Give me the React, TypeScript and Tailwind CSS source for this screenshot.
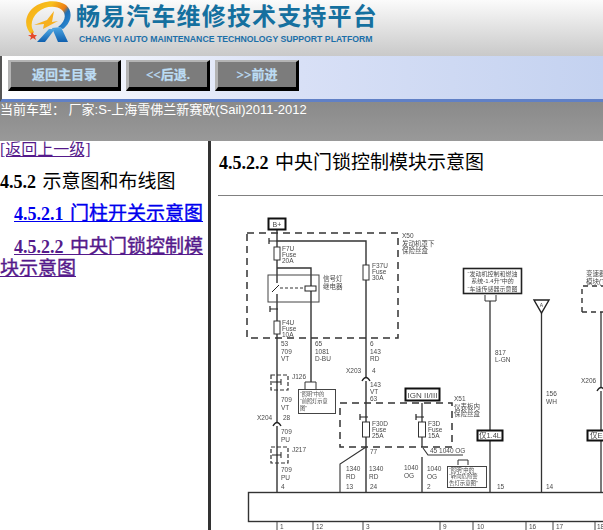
const T = ({ x, y, c, s = 6.5, a }: { x: number; y: number; c: string; s?: number; a?: "middle" }) => (
  <text x={x} y={y} fontSize={s} fill="#4a4a4a" textAnchor={a} fontFamily="'Liberation Sans','Noto Sans CJK SC',sans-serif">{c}</text>
);

function Fuse({ x, y, h = 13, w = 6 }: { x: number; y: number; h?: number; w?: number }) {
  return <rect x={x - w / 2} y={y} width={w} height={h} fill="#fff" stroke="#333" strokeWidth="1" />;
}

function Tick({ x, y }: { x: number; y: number }) {
  return <path d={`M${x - 6} ${y}H${x + 2}M${x - 6} ${y - 3}V${y + 3}`} fill="none" stroke="#222" strokeWidth="1.2" />;
}

function Arc({ x, y }: { x: number; y: number }) {
  return <path d={`M${x - 4} ${y + 2}Q${x} ${y - 5} ${x + 4} ${y + 2}`} fill="#fff" stroke="#222" strokeWidth="1.4" />;
}

function Lines({ x, y, items, step = 7.5, s }: { x: number; y: number; items: string[]; step?: number; s?: number }) {
  return <>{items.map((c, i) => <T key={c + i} x={x} y={y + i * step} c={c} s={s} />)}</>;
}

function Diagram() {
  return (
    <svg viewBox="211 200 392 330" width="392" height="330" className="block shrink-0 blur-[0.3px]">
      <g fill="none" stroke="#333" strokeWidth="1.4">
        <path d="M277 229V283M277 294V360M277 241H366V338M277 268H311V382M366 338V492M277 360V422M277 425V492" />
        <path d="M490 301V492M541.5 313V492M601 312V492M422 403V447M422 457V492" strokeWidth="1.3" />
        <path d="M366 447L340 464V492M423 448L428 455H463" strokeWidth="1.1" />
      </g>
      <rect x="268.500" y="218.500" width="17" height="11" fill="#fff" stroke="#111" strokeWidth="2" />
      <T x={277} y={227} c="B+" s={7} a="middle" />
      <rect x="247" y="233" width="151" height="105" fill="none" stroke="#333" strokeWidth="1.5" strokeDasharray="7 5" />
      <Tick x={275} y={241} />
      <Fuse x={277} y={247} />
      <Lines x={282} y={251} items={["F7U", "Fuse", "20A"]} step={6.2} />
      <rect x="268" y="275" width="51" height="27" fill="none" stroke="#444" />
      <path d="M272 292L279 285" stroke="#222" fill="none" />
      <path d="M280 288H305" stroke="#333" strokeDasharray="3 2" fill="none" />
      <rect x="305" y="286" width="11" height="5" fill="#fff" stroke="#222" />
      <Lines x={323} y={281} items={["信号灯", "继电器"]} step={7.5} />
      <Tick x={276} y={309} />
      <Fuse x={277} y={321} />
      <Lines x={282} y={325} items={["F4U", "Fuse", "10A"]} step={6.2} />
      <Fuse x={366} y={265} h={15} />
      <Lines x={372} y={268} items={["F37U", "Fuse", "30A"]} step={6.2} />
      <Lines x={402} y={238} items={["X50", "发动机罩下", "保险丝盒"]} />
      <Lines x={281} y={346} items={["53", "709", "VT"]} />
      <Lines x={315} y={346} items={["65", "1081", "D-BU"]} />
      <Lines x={370} y={346} items={["6", "143", "RD"]} />

      <T x={346} y={373} c="X203" />
      <T x={372} y={373} c="4" />
      <Arc x={366} y={379} />
      <Lines x={370} y={387} items={["143", "VT", "63"]} step={7} />
      <rect x="271" y="375" width="17" height="15" fill="none" stroke="#333" strokeWidth="1.2" strokeDasharray="4 2" />
      <path d="M272 382H281M281 379V385" stroke="#222" fill="none" />
      <T x={292} y={379} c="J126" />
      <path d="M305 389V382H316V389" fill="none" stroke="#333" />
      <rect x="298.500" y="389.500" width="37" height="24" fill="#fff" stroke="#444" />
      <Lines x={300} y={396} items={["“照明”中的", "“前照灯示意", "图”"]} step={6.8} s={5.2} />
      <Lines x={281} y={402} items={["709", "VT"]} />
      <T x={257} y={420} c="X204" />
      <T x={283} y={420} c="28" />
      <Arc x={277} y={424} />
      <Lines x={281} y={434} items={["709", "PU"]} />
      <rect x="271" y="447" width="17" height="16" fill="none" stroke="#333" strokeWidth="1.2" strokeDasharray="4 2" />
      <path d="M272 455H281M281 452V458" stroke="#222" fill="none" />
      <T x={292} y={452} c="J217" />
      <Lines x={281} y={472} items={["709", "PU"]} />
      <T x={281} y={489} c="4" />

      <rect x="405.500" y="388.500" width="34" height="12" fill="#fff" stroke="#111" strokeWidth="2" />
      <T x={422.500} y={397.500} c="IGN II/III" s={8} a="middle" />
      <rect x="340" y="403" width="112" height="44" fill="none" stroke="#333" strokeWidth="1.5" strokeDasharray="7 5" />
      <Tick x={366} y={417} />
      <Fuse x={366} y={422} h={15} w={7} />
      <Lines x={372} y={426} items={["F30D", "Fuse", "25A"]} step={6.2} />
      <Tick x={422} y={417} />
      <Fuse x={422} y={422} h={15} w={7} />
      <Lines x={428} y={426} items={["F3D", "Fuse", "15A"]} step={6.2} />
      <Lines x={454} y={401} items={["X51", "仪表板内", "保险丝盒"]} />
      <T x={370} y={454} c="77" />
      <T x={430} y={453} c="45 1040  OG" />
      <Lines x={346} y={471} items={["1340", "RD"]} />
      <Lines x={369} y={471} items={["1340", "RD"]} />
      <Lines x={404} y={470} items={["1040", "OG"]} />
      <Lines x={427} y={471} items={["1040", "OG"]} />
      <path d="M458 465V460H468V465" fill="none" stroke="#333" />
      <rect x="447.500" y="466.500" width="39" height="21" fill="#fff" stroke="#444" />
      <Lines x={449} y={472} items={["“照明”中的", "“转向危险警", "告灯示意图”"]} step={6.4} s={5.4} />
      <T x={346} y={489} c="13" />
      <T x={370} y={489} c="24" />
      <T x={427} y={489} c="2" />
      <T x={497} y={489} c="15" />
      <T x={546} y={489} c="14" />

      <rect x="463.500" y="268.500" width="58" height="25" fill="#fff" stroke="#222" strokeWidth="1.6" />
      <T x={492.500} y={275.500} c="“发动机控制和燃油" s={6} a="middle" />
      <T x={492.500} y={283} c="系统-1.4升”中的" s={6} a="middle" />
      <T x={492.500} y={290.500} c="“车速传感器示意图" s={6} a="middle" />
      <path d="M485 295V301H496V295" fill="none" stroke="#333" />
      <T x={495} y={355} c="817" />
      <T x={495} y={362} c="L-GN" />
      <path d="M534 300H549L541.500 313Z" fill="#fff" stroke="#222" strokeWidth="1.4" />
      <T x={541.500} y={307} c="A" s={5} a="middle" />
      <Lines x={546} y={396} items={["156", "WH"]} />
      <Lines x={586} y={276} items={["变速器", "模块(T"]} />
      <path d="M582 312V286H603M582 312H603" fill="none" stroke="#333" strokeWidth="1.4" strokeDasharray="5 4" />
      <T x={581} y={383} c="X206" />
      <Arc x={601} y={389} />
      <rect x="477.500" y="430.500" width="25" height="10" fill="#fff" stroke="#111" strokeWidth="2" />
      <T x={490} y={438} c="仅1.4L" s={7.500} a="middle" />
      <rect x="587.500" y="430.500" width="30" height="10" fill="#fff" stroke="#111" strokeWidth="2" />
      <T x={590} y={438} c="仅ECM" s={7.500} />

      <rect x="248.500" y="492.500" width="370" height="29" fill="#fff" stroke="#333" strokeWidth="1.4" />
      <path d="M277 522V530M313 522V530M363 522V530M440 522V530M473 522V530M526 522V530M553 522V530M595 522V530" stroke="#444" />
      {[[280, "1"], [316, "12"], [366, "3"], [443, "9"], [477, "10"], [529, "16"], [556, "17"], [597, "18"]].map(([x, c]) => (
        <T key={c as string} x={x as number} y={529} c={c as string} />
      ))}
    </svg>
  );
}

function Logo() {
  return (
    <svg width="47" height="42" viewBox="0 0 47 42" className="shrink-0">
      <defs>
        <linearGradient id="o" x1="0" y1="0" x2="1" y2="0.6">
          <stop offset="0" stopColor="#f6a81a" />
          <stop offset="0.45" stopColor="#f7c01c" />
          <stop offset="0.72" stopColor="#ee7d12" />
          <stop offset="0.82" stopColor="#1c6fb8" />
          <stop offset="1" stopColor="#2a86cf" />
        </linearGradient>
        <linearGradient id="b" x1="0" y1="0" x2="0" y2="1">
          <stop offset="0" stopColor="#4fa8e4" />
          <stop offset="1" stopColor="#0f5fae" />
        </linearGradient>
      </defs>
      <path fillRule="evenodd" d="M7 34C-1 27 -1 15 8 7C17 -1 33 -2 41 4C48 10 47 21 38 28L33 26C40 21 42 14 37 9C31 4 20 5 13 11C6 17 5 26 9 31Z" fill="url(#o)" />
      <path d="M9 24L22 19L29 10L27 21L33 20L18 28L19 23Z" fill="#f6b01e" />
      <path d="M7 31L9 34L12 34L10 36L11 39L8 37L5 39L6 36L3 34L6 34Z" fill="#e5482a" />
      <path d="M27 27L36 26L43 41H33Z" fill="url(#b)" />
      <path d="M24 28L30 28L20 41H12Z" fill="url(#b)" />
    </svg>
  );
}

function NavButton({ label, w }: { label: string; w: string }) {
  return (
    <button className={`${w} h-[31px] border-t-2 border-r-[3px] border-b-4 border-l-[3px] border-t-[#b4b4b4] border-r-black border-b-black border-l-[#b4b4b4] bg-[#7c7c7c] text-[13px] font-bold text-[#bcdcf4] [-webkit-text-stroke:0.25px_#bcdcf4] [font-family:'Liberation_Serif','Noto_Sans_CJK_SC',serif]`}>
      {label}
    </button>
  );
}

const Cjk = ({ children, heavy }: { children: string; heavy?: boolean }) => (
  <span className={heavy ? "text-[19px] font-normal [-webkit-text-stroke:0.4px]" : "text-[19px] font-normal"}>{children}</span>
);

export default function App() {
  return (
    <div className="flex h-[530px] w-[603px] flex-col overflow-hidden bg-white [font-family:'Liberation_Serif','Noto_Sans_CJK_SC',serif]">
      <header className="flex h-[56px] shrink-0 bg-gradient-to-b from-[#fbfbfb] to-[#c9c9c9] pl-[25px] pt-[1px]">
        <Logo />
        <div className="ml-[4px] flex flex-col">
          <div className="text-[24px] leading-[28px] font-bold tracking-[1.15px] whitespace-nowrap text-[#15709f] [font-family:'Noto_Sans_CJK_SC',sans-serif]">畅易汽车维修技术支持平台</div>
          <div className="mt-[4px] ml-[3px] text-[8.7px] leading-[12px] font-bold whitespace-nowrap text-[#1c6fa8] [font-family:'Liberation_Sans',sans-serif]">CHANG YI AUTO MAINTENANCE TECHNOLOGY SUPPORT PLATFORM</div>
        </div>
      </header>
      <nav className="flex h-[46px] shrink-0 gap-[5px] border-b-[3px] border-b-[#6080c6] border-l-2 border-l-[#555] bg-gradient-to-r from-white via-[#d8e0f6] to-[#c4d2f0] pl-[6px] pt-[4px]">
        <NavButton label="返回主目录" w="w-[113px]" />
        <NavButton label="<<后退." w="w-[84px]" />
        <NavButton label=">>前进" w="w-[84px]" />
      </nav>
      <div className="h-[39px] shrink-0 bg-gradient-to-b from-[#8a8a8a] to-[#999999] text-[13px] leading-[15px] text-white [font-family:'Liberation_Sans','Noto_Sans_CJK_SC',sans-serif]">当前车型： 厂家:S-上海雪佛兰新赛欧(Sail)2011-2012</div>
      <div className="flex min-h-0 flex-1">
        <aside className="w-[208px] shrink-0">
          <a href="#" className="block text-[16px] leading-[18px] text-[#551a8b] underline">[返回上一级]</a>
          <h3 className="mt-[11px] text-[18px] leading-[24px] text-black [word-spacing:2px]"><b>4.5.2</b> <Cjk>示意图和布线图</Cjk></h3>
          <p className="mt-[8px] indent-[14px] text-[18px] leading-[24px] font-bold [word-spacing:2px]"><a href="#" className="text-[#0000ee] underline">4.5.2.1 <Cjk heavy>门柱开关示意图</Cjk></a></p>
          <p className="mt-[10px] indent-[14px] text-[18px] leading-[22px] font-bold [word-spacing:2px]"><a href="#" className="text-[#551a8b] underline">4.5.2.2 <Cjk heavy>中央门锁控制模块示意图</Cjk></a></p>
        </aside>
        <div className="w-[3px] shrink-0 bg-[#333]" />
        <main className="flex min-w-0 flex-1 flex-col overflow-hidden">
          <h2 className="mt-[11px] ml-[8px] text-[18px] leading-[22px] font-bold whitespace-nowrap text-black [word-spacing:2px]">4.5.2.2 <Cjk>中央门锁控制模块示意图</Cjk></h2>
          <div className="mt-[21px] ml-[7px] h-px bg-[#808080]" />
          <div className="mt-[4px]"><Diagram /></div>
        </main>
      </div>
    </div>
  );
}
